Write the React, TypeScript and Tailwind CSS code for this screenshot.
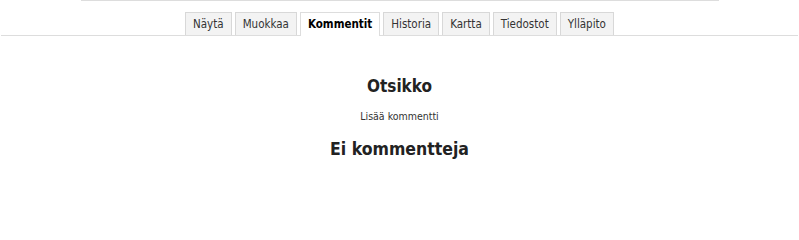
export default function App() {
  const tabs = ["Näytä", "Muokkaa", "Kommentit", "Historia", "Kartta", "Tiedostot", "Ylläpito"];
  const active = "Kommentit";
  return (
    <div className="min-h-[213px] bg-white text-[#222] [font-family:'DejaVu_Sans_Condensed','DejaVu_Sans',sans-serif]">
      <div className="mx-auto w-[638px] border-t border-[#dddddd]" />
      <div className="mx-px mt-[11px] flex justify-center gap-[3px] border-b border-[#dddddd]">
        {tabs.map((t) =>
          t === active ? (
            <div
              key={t}
              className="-mb-px border border-b-0 border-[#dddddd] bg-white px-[7px] pb-[5px] pt-[4px] text-[11.5px] font-bold leading-[14px] text-black"
            >
              {t}
            </div>
          ) : (
            <div
              key={t}
              className="border border-b-0 border-[#d8d8d8] bg-[#f3f3f3] px-[7px] pb-[4px] pt-[4px] text-[11.5px] leading-[14px] text-[#333]"
            >
              {t}
            </div>
          )
        )}
      </div>
      <div className="flex flex-col items-center">
        <h1 className="mt-[40px] text-[17px] font-bold leading-[20px] text-[#222]">Otsikko</h1>
        <p className="mt-[13px] text-[10.5px] leading-[14px] text-[#333]">Lisää kommentti</p>
        <h2 className="mt-[15px] text-[17.5px] font-bold leading-[22px] text-[#222]">Ei kommentteja</h2>
      </div>
    </div>
  );
}
